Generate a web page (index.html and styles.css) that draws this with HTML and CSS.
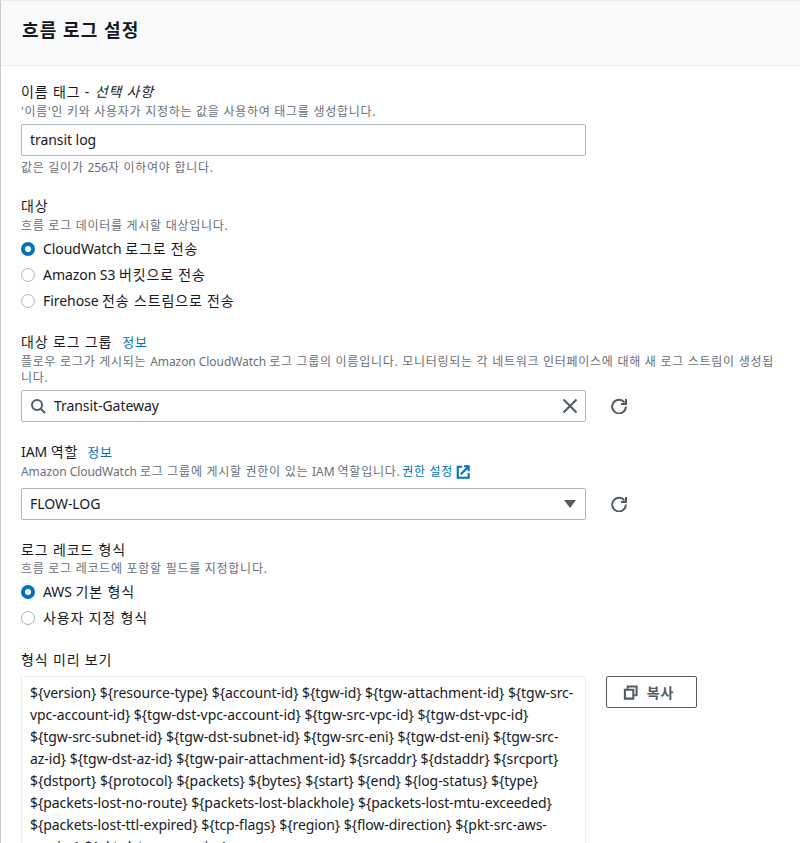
FILE: index.html
```html
<!DOCTYPE html>
<html lang="ko">
<head>
<meta charset="utf-8">
<title>흐름 로그 설정</title>
<link rel="stylesheet" href="styles.css">
</head>
<body>
<main class="panel">
  <header class="panel-head"><h2 class="panel-title ko">흐름 로그 설정</h2></header>
  <div class="panel-body">
    <section class="field">
      <div class="label ko">이름 태그 - <i class="optional">선택 사항</i></div>
      <div class="desc ko">'이름'인 키와 사용자가 지정하는 값을 사용하여 태그를 생성합니다.</div>
      <div class="control-row"><div class="input">transit log</div></div>
      <div class="desc constraint"><span class="ko">값은 길이가 </span>256<span class="ko">자 이하여야 합니다.</span></div>
    </section>

    <section class="field">
      <div class="label ko">대상</div>
      <div class="desc ko">흐름 로그 데이터를 게시할 대상입니다.</div>
      <div class="radios">
        <div class="radio-row"><span class="radio checked"></span><span>CloudWatch <span class="ko">로그로 전송</span></span></div>
        <div class="radio-row"><span class="radio"></span><span>Amazon S3 <span class="ko">버킷으로 전송</span></span></div>
        <div class="radio-row"><span class="radio"></span><span>Firehose <span class="ko">전송 스트림으로 전송</span></span></div>
      </div>
    </section>

    <section class="field">
      <div class="label"><span class="ko">대상 로그 그룹</span><a class="info ko">정보</a></div>
      <div class="desc"><span class="ko">플로우 로그가 게시되는 </span>Amazon CloudWatch <span class="ko">로그 그룹의 이름입니다. 모니터링되는 각 네트워크 인터페이스에 대해 새 로그 스트림이 생성됩니다.</span></div>
      <div class="control-row">
        <div class="input search">
          <svg class="icon-search" width="16" height="16" viewBox="0 0 16 16" fill="none" stroke="#545b64" stroke-width="2"><circle cx="7" cy="7" r="5"/><path d="M10.700 10.700 15 15"/></svg>
          <span class="grow">Transit-Gateway</span>
          <svg class="icon-clear" width="16" height="16" viewBox="0 0 16 16" fill="none" stroke="#545b64" stroke-width="2"><path d="M2.500 1.500l13 13M15.500 1.500l-13 13"/></svg>
        </div>
        <svg class="refresh" width="16" height="16" viewBox="0 0 16 16" fill="none" stroke="#545b64" stroke-width="2"><path d="M13.400 4.500A6.800 6.800 0 1 0 14.800 8.500"/><path d="M15 1v5H10" stroke-width="2"/></svg>
      </div>
    </section>

    <section class="field">
      <div class="label"><span>IAM <span class="ko">역할</span></span><a class="info info-iam ko">정보</a></div>
      <div class="desc desc-icon">Amazon CloudWatch <span class="ko">로그 그룹에 게시할 권한이 있는 </span>IAM <span class="ko">역할입니다. </span><a class="link ko">권한 설정</a>
        <svg class="external" width="14" height="14" viewBox="0 0 16 16" fill="none" stroke="#0073bb" stroke-width="2.400"><path d="M7 2H2v12.500h12.500V9"/><path d="M5.500 10.500 14 2M9 1.500h5.500V7"/></svg>
      </div>
      <div class="control-row">
        <div class="input select"><span class="grow">FLOW-LOG</span><span class="caret"></span></div>
        <svg class="refresh" width="16" height="16" viewBox="0 0 16 16" fill="none" stroke="#545b64" stroke-width="2"><path d="M13.400 4.500A6.800 6.800 0 1 0 14.800 8.500"/><path d="M15 1v5H10" stroke-width="2"/></svg>
      </div>
    </section>

    <section class="field">
      <div class="label ko">로그 레코드 형식</div>
      <div class="desc desc-tight ko">흐름 로그 레코드에 포함할 필드를 지정합니다.</div>
      <div class="radios">
        <div class="radio-row"><span class="radio checked"></span><span>AWS <span class="ko">기본 형식</span></span></div>
        <div class="radio-row"><span class="radio"></span><span class="ko">사용자 지정 형식</span></div>
      </div>
    </section>

    <section class="field">
      <div class="label preview-label ko">형식 미리 보기</div>
      <div class="preview-row">
        <div class="preview">${version} ${resource-type} ${account-id} ${tgw-id} ${tgw-attachment-id} ${tgw-src-<br>vpc-account-id} ${tgw-dst-vpc-account-id} ${tgw-src-vpc-id} ${tgw-dst-vpc-id}<br>${tgw-src-subnet-id} ${tgw-dst-subnet-id} ${tgw-src-eni} ${tgw-dst-eni} ${tgw-src-<br>az-id} ${tgw-dst-az-id} ${tgw-pair-attachment-id} ${srcaddr} ${dstaddr} ${srcport}<br>${dstport} ${protocol} ${packets} ${bytes} ${start} ${end} ${log-status} ${type}<br>${packets-lost-no-route} ${packets-lost-blackhole} ${packets-lost-mtu-exceeded}<br>${packets-lost-ttl-expired} ${tcp-flags} ${region} ${flow-direction} ${pkt-src-aws-<br>service} ${pkt-dst-aws-service}</div>
        <button class="copy" type="button">
          <svg width="15" height="15" viewBox="0 0 16 16" fill="none" stroke="#545b64" stroke-width="2.200"><path d="M2 5h9v9.500H2z"/><path d="M5 4V1.500h9.500V11H12"/></svg>
          <span class="ko">복사</span>
        </button>
      </div>
    </section>
  </div>
</main>
</body>
</html>
```
FILE: styles.css
```css
html, body {
  margin: 0;
  padding: 0;
  height: 843px;
  overflow: hidden;
  background: #fff;
}
body {
  font-family: "Noto Sans", "Noto Sans CJK KR", sans-serif;
  font-size: 14px;
  line-height: 22px;
  letter-spacing: -0.06px;
  color: #16191f;
}
.ko { letter-spacing: 0.06em; }
.panel {
  height: 843px;
  box-sizing: border-box;
  border-left: 1px solid #c6cccc;
  border-top: 1px solid #eaeded;
  overflow: hidden;
}
.panel-head {
  height: 65px;
  box-sizing: border-box;
  padding: 0 21px;
  display: flex;
  align-items: center;
  background: #fafafa;
  border-bottom: 1px solid #eaeded;
}
.panel-title {
  margin: 0 0 6px;
  font-size: 18px;
  line-height: 24px;
  font-weight: 700;
}
.panel-body {
  padding: 15px 0 0 20px;
  display: flex;
  flex-direction: column;
  gap: 19px;
}
.label { height: 22px; }
.optional { font-style: italic; }
.info {
  margin-left: 10px;
  font-size: 13px;
  color: #0073bb;
}
.info-iam { margin-left: 9px; }
.desc {
  font-size: 12px;
  line-height: 16px;
  color: #687078;
  width: 757px;
  margin-top: 1px;
}
.desc-tight { margin-top: 0; }
.constraint { margin-top: 4px; }
.desc-icon { height: 20px; }
.link { color: #0073bb; margin-left: -2px; }
.external { vertical-align: -3px; }
.control-row {
  display: flex;
  align-items: center;
  margin-top: 4px;
}
.input {
  width: 565px;
  height: 32px;
  box-sizing: border-box;
  display: flex;
  align-items: center;
  padding: 0 8px;
  border: 1px solid #aab7b8;
  border-radius: 2px;
  background: #fff;
}
.search .icon-search { margin-right: 8px; }
.grow { flex: 1; }
.caret {
  width: 0;
  height: 0;
  margin-right: 1px;
  border-left: 6px solid transparent;
  border-right: 6px solid transparent;
  border-top: 8px solid #545b64;
}
.refresh { margin-left: 25px; }
.radios {
  display: flex;
  flex-direction: column;
  gap: 4px;
  margin-top: 4px;
}
.radio-row {
  display: flex;
  align-items: center;
  height: 22px;
}
.radio {
  width: 14px;
  height: 14px;
  box-sizing: border-box;
  margin-right: 8px;
  border: 1px solid #aab7b8;
  border-radius: 50%;
  background: #fff;
}
.radio.checked {
  border: 4px solid #0073bb;
}
.preview-label { margin-top: 1px; }
.preview-row {
  display: flex;
  align-items: flex-start;
  margin-top: 5px;
}
.preview {
  width: 565px;
  height: 300px;
  flex: none;
  box-sizing: border-box;
  padding: 5px 8px;
  border: 1px solid #eaeded;
  border-radius: 2px;
  white-space: nowrap;
}
.copy {
  margin-left: 20px;
  width: 91px;
  height: 32px;
  display: flex;
  align-items: center;
  justify-content: center;
  gap: 9px;
  padding: 0 6px 0 0;
  border: 1px solid #545b64;
  border-radius: 2px;
  background: #fff;
  color: #545b64;
  font-family: inherit;
  font-size: 14px;
  font-weight: 700;
}
```
